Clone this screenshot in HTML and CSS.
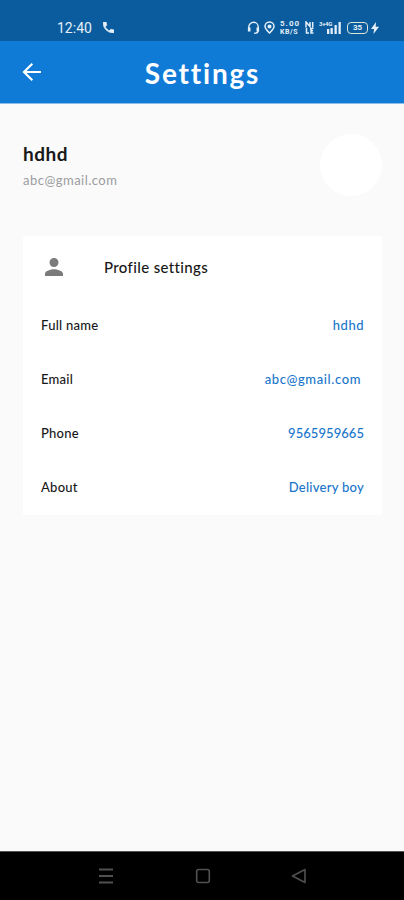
FILE: index.html
```html
<!DOCTYPE html>
<html lang="en">
<head>
<meta charset="utf-8">
<title>Settings</title>
<link rel="stylesheet" href="styles.css">
</head>
<body>
<div class="status">
  <span class="time">12:40</span>
  <svg class="call" width="11" height="11" viewBox="3 3 18 18"><path fill="currentColor" stroke="currentColor" d="M6.600 10.800c1.400 2.800 3.800 5.100 6.600 6.600l2.200-2.200c.3-.3.700-.4 1-.2 1.100.4 2.300.6 3.600.6.600 0 1 .4 1 1V20c0 .6-.4 1-1 1C10.600 21 3 13.400 3 4c0-.6.400-1 1-1h3.500c.6 0 1 .4 1 1 0 1.200.2 2.500.6 3.600.1.400 0 .700-.2 1z"/></svg>
  <div class="indicators">
    <svg width="13" height="14" viewBox="0 0 13 14" fill="none" stroke="currentColor"><path stroke-width="1.400" d="M1.800 8V6a4.700 4.700 0 0 1 9.400 0v3.500c0 1.800-1.200 2.800-4 2.800"/><path stroke-width="2.600" d="M2.200 6.500v4M10.800 6.500v4"/></svg>
    <svg class="pin" width="11" height="14" viewBox="0 0 11 14" fill="none" stroke="currentColor" stroke-width="1.500"><path d="M5.500 12C3 9.500 1 7.600 1 5.500a4.500 4.500 0 0 1 9 0c0 2.100-2 4-4.500 6.500z"/><circle cx="5.500" cy="5.500" r="1.300" fill="currentColor"/></svg>
    <span class="speed"><span class="rate">5.00</span><span class="unit">KB/S</span></span>
    <svg class="volte" width="9" height="13" viewBox="0 0 9 13" fill="none" stroke="currentColor" stroke-width="1.500"><path d="M1 6.500V1l4 4.500V1M7.700 1v5.500M1.500 7v5h2.500M5 7.500h3.500M6 7v5h2.500M6 9.700h2"/></svg>
    <span class="network">3+4G</span>
    <svg class="signal" width="14" height="13" viewBox="0 0 14 13" fill="currentColor"><path d="M0 8h2.300v5H0zM3.500 7h2.300v6H3.500zM7.500 4h2.300v9H7.500zM11.500 1h2.300v12h-2.300z"/></svg>
    <span class="battery">35</span>
    <svg class="bolt" width="8" height="12" viewBox="0 0 8 12"><path fill="currentColor" d="M5 0 0 7h3l-.5 5L8 4.800H4.700z"/></svg>
  </div>
</div>
<header class="bar">
  <svg class="back" width="20" height="20" viewBox="0 0 20 20" fill="none" stroke="currentColor" stroke-width="2.200"><path d="M19 10H2.500M10.300 1.700 2 10l8.300 8.300"/></svg>
  <h1>Settings</h1>
</header>
<main>
  <section class="profile">
    <div>
      <h2>hdhd</h2>
      <p>abc@gmail.com</p>
    </div>
    <div class="avatar"></div>
  </section>
  <section class="card">
    <div class="card-head">
      <svg width="18" height="18" viewBox="4 4 16 16"><path fill="#7b7b7b" d="M12 12c2.210 0 4-1.790 4-4s-1.790-4-4-4-4 1.790-4 4 1.790 4 4 4zm0 2c-2.670 0-8 1.340-8 4v2h16v-2c0-2.660-5.330-4-8-4z"/></svg>
      <h3>Profile settings</h3>
    </div>
    <div class="row"><span>Full name</span><span class="value v-name">hdhd</span></div>
    <div class="row"><span>Email</span><span class="value v-email">abc@gmail.com</span></div>
    <div class="row"><span>Phone</span><span class="value v-phone">9565959665</span></div>
    <div class="row"><span>About</span><span class="value">Delivery boy</span></div>
  </section>
</main>
<nav class="nav">
  <svg width="16" height="16" viewBox="0 0 16 16" stroke="currentColor" stroke-width="1.800"><path d="M1 1.500h14M1 8h14M1 14.500h14"/></svg>
  <svg width="16" height="16" viewBox="0 0 16 16" fill="none" stroke="currentColor" stroke-width="1.600"><rect x="1.700" y="1.500" width="12.600" height="13" rx="2"/></svg>
  <svg width="16" height="16" viewBox="0 0 16 16" fill="none" stroke="currentColor" stroke-width="1.600" stroke-linejoin="round"><path d="M14 1.500v13L1.500 8z"/></svg>
</nav>
</body>
</html>
```
FILE: styles.css
```css
* { box-sizing: border-box; margin: 0; padding: 0; }
body {
  width: 404px;
  height: 900px;
  display: flex;
  flex-direction: column;
  overflow: hidden;
  background: #fafafa;
  color: #181818;
  font-family: Lato, "Liberation Sans", sans-serif;
}
svg { display: block; flex: none; }
.status {
  height: 41px;
  flex: none;
  display: flex;
  align-items: center;
  padding: 14px 25px 0 57px;
  background: #0b5c9e;
  color: #e4eff9;
}
.time { width: 46px; font: 400 14px/16px Roboto, sans-serif; letter-spacing: 0; }
.indicators { margin-left: auto; display: flex; align-items: center; height: 16px; }
.pin { margin-left: 4px; }
.speed {
  width: 20px;
  height: 16px;
  margin-left: 5px;
  display: flex;
  flex-direction: column;
  justify-content: space-between;
  font: 700 8px/8px Roboto, sans-serif;
}
.rate { letter-spacing: 1px; }
.unit { font-size: 7px; line-height: 7px; letter-spacing: 0.600px; }
.volte { margin-left: 5px; }
.network { width: 11px; margin-left: 5px; font: 700 6px/7px Roboto, sans-serif; letter-spacing: -0.3px; align-self: flex-start; white-space: nowrap; }
.signal { margin-left: -3px; }
.battery {
  width: 21px;
  height: 12px;
  margin-left: 6px;
  border: 1.500px solid #dce6d8;
  border-radius: 4px;
  font: 700 8px/10px Roboto, sans-serif;
  text-align: center;
}
.bolt { margin-left: 3px; }
.bar {
  height: 63px;
  flex: none;
  display: grid;
  grid-template-columns: 60px 1fr 60px;
  align-items: center;
  padding-bottom: 1px;
  background: #107ad7;
  border-bottom: 1px solid #8dbde8;
  color: #fff;
}
.back { margin-left: 22px; }
h1 { font-size: 28px; line-height: 34px; font-weight: 700; letter-spacing: 1.800px; text-align: center; padding: 3px 0 0 1px; }
main { flex: 1; padding: 30px 22px 0 23px; }
.profile { height: 62px; display: flex; justify-content: space-between; }
h2 { margin-top: 8px; font-size: 19px; line-height: 24px; font-weight: 700; letter-spacing: 0.500px; }
.profile p { margin-top: 6px; color: #9a9da0; font-size: 13px; line-height: 16px; letter-spacing: 0.480px; }
.avatar { width: 62px; height: 62px; border-radius: 50%; background: #fff; }
.card { height: 279px; margin-top: 40px; background: #fff; border-radius: 2px; }
.card-head { height: 62px; display: flex; align-items: center; padding-left: 22px; }
h3 { margin-left: 41px; font-size: 15px; line-height: 20px; font-weight: 500; letter-spacing: 0.360px; }
.row { height: 54px; display: flex; align-items: center; justify-content: space-between; padding: 0 18px; font-size: 13px; font-weight: 500; letter-spacing: 0.260px; }
.value { color: #1976cb; }
.v-name { letter-spacing: 0.500px; }
.v-email { margin-right: 3px; letter-spacing: 0.600px; }
.v-phone { letter-spacing: 0.050px; }
.nav {
  height: 49px;
  flex: none;
  display: flex;
  align-items: center;
  justify-content: space-between;
  padding: 0 97px 1px 98px;
  background: #000;
  border-top: 1px solid #555;
  color: #505050;
}
```
